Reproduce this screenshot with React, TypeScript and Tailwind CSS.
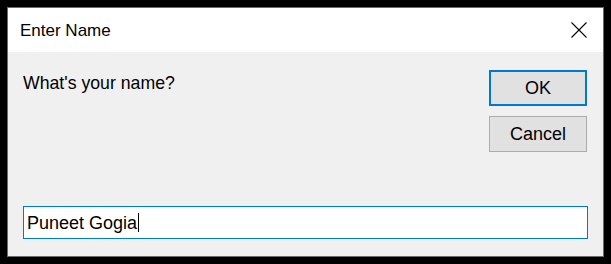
import React from "react";

export default function App() {
  const font = { fontFamily: '"Liberation Sans", Arial, sans-serif' };
  return (
    <div className="w-[611px] h-[264px] bg-black pl-[7px] pt-[7px]" style={font}>
      <div className="w-[597px] h-[250px] border border-[#6b6b6b] flex flex-col">
        <div className="h-[44px] bg-white flex items-center justify-between pl-[12px] pr-[16px]">
          <span className="text-[17px] text-black leading-none">Enter Name</span>
          <svg width="16" height="16" viewBox="0 0 16 16">
            <path d="M0.5 0.5 L15.5 15.5 M15.5 0.5 L0.5 15.5" stroke="#000" strokeWidth="1.1" fill="none" />
          </svg>
        </div>
        <div className="flex-1 bg-[#f0f0f0] flex flex-col pl-[15px] pr-[15px] pt-[18px]">
          <div className="flex justify-between pr-px">
            <div className="text-[17.7px] leading-[20px] text-black pt-[3px]">What's your name?</div>
            <div className="flex flex-col gap-[10px]">
              <button className="w-[98px] h-[36px] bg-[#e1e1e1] border-2 border-[#0078d7] text-[18px] text-black leading-none">OK</button>
              <button className="w-[98px] h-[36px] bg-[#e1e1e1] border border-[#adadad] text-[18px] text-black leading-none">Cancel</button>
            </div>
          </div>
          <div className="mt-[54px] h-[33px] bg-white border border-[#0078d7] flex items-center pl-[3px]">
            <span className="text-[18px] text-black leading-none">Puneet Gogia</span>
            <span className="inline-block w-px h-[19px] bg-black ml-[1px]" />
          </div>
        </div>
      </div>
    </div>
  );
}
